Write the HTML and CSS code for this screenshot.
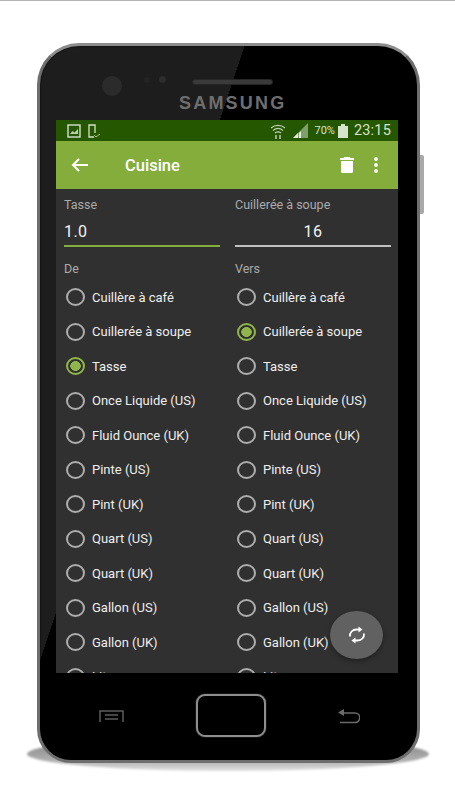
FILE: index.html

```html
<!DOCTYPE html>
<html lang="fr">
<head>
  <meta charset="UTF-8">
  <title>Cuisine</title>
  <meta name="viewport" content="width=device-width, initial-scale=1.0"/>
  <link rel="stylesheet" href="styles.css">
</head>
<body>
  <div class="phone-wrap">
    <div class="phone-shadow"></div>
    <div class="side-key"></div>
    <div class="phone">
      <div class="top-bezel">
        <div class="camera"></div>
        <div class="sensor sensor-a"></div>
        <div class="sensor sensor-b"></div>
        <div class="speaker"></div>
        <div class="brand">SAMSUNG</div>
      </div>

      <div class="screen">
        <div class="status-bar">
          <svg class="st-icon" width="14" height="14" viewBox="0 0 14 14"><rect x="1" y="1" width="12" height="12" fill="none" stroke="#d5e2cc" stroke-width="1.4"/><path d="M3 10l2.5-3 2 1.5L11 5v5z" fill="#b9cdae"/></svg>
          <svg class="st-icon" width="16" height="14" viewBox="0 0 16 14"><path d="M8 13H3V1h6v8" fill="none" stroke="#d5e2cc" stroke-width="1.3"/><path d="M8 11l2 2 4-3" fill="none" stroke="#a9c09b" stroke-width="1"/></svg>
          <span class="st-space"></span>
          <svg class="st-wifi" width="16" height="16" viewBox="0 0 16 16" fill="none" stroke="#b9cdae" stroke-width="1.2"><path d="M1 5c4-3.500 10-3.500 14 0M3 7.500c3-2.500 7-2.500 10 0M5 10c2-1.500 4-1.500 6 0"/><path d="M6 12v4M10 12v4" stroke-width="1.500"/></svg>
          <svg class="st-signal" width="16" height="15" viewBox="0 0 16 15"><path d="M16 0v15H1z" fill="#7fa06a"/><path d="M6 10v5H1zM9 8v7H7v-5z" fill="#e3ebdc"/></svg>
          <span class="st-pct">70%</span>
          <svg class="st-batt" width="10" height="14" viewBox="0 0 10 14"><path d="M3 0h4v2h3v12H0V2h3z" fill="#d5e2cc"/></svg>
          <span class="st-time">23:15</span>
        </div>

        <div class="toolbar">
          <svg class="tb-back" width="18" height="14" viewBox="0 0 18 14" fill="none" stroke="#fff" stroke-width="2"><path d="M17 7H2M8 1L2 7l6 6"/></svg>
          <span class="tb-title">Cuisine</span>
          <svg class="tb-trash" width="14" height="16" viewBox="0 0 14 16" fill="#fff"><path d="M4.500 0h5l1 1H14v2H0V1h3.500zM1 4h12v10.500a1.500 1.500 0 0 1-1.500 1.500h-9A1.500 1.500 0 0 1 1 14.500z"/></svg>
          <svg class="tb-more" width="4" height="16" viewBox="0 0 4 16" fill="#fff"><circle cx="2" cy="2" r="1.900"/><circle cx="2" cy="8" r="1.900"/><circle cx="2" cy="14" r="1.900"/></svg>
        </div>

        <div class="content">
          <div class="columns">
            <div class="column">
              <div class="field-label">Tasse</div>
              <div class="field-value focused">1.0</div>
              <div class="group-label">De</div>
              <div class="radio"><i></i>Cuillère à café</div>
              <div class="radio"><i></i>Cuillerée à soupe</div>
              <div class="radio on"><i></i>Tasse</div>
              <div class="radio"><i></i>Once Liquide (US)</div>
              <div class="radio"><i></i>Fluid Ounce (UK)</div>
              <div class="radio"><i></i>Pinte (US)</div>
              <div class="radio"><i></i>Pint (UK)</div>
              <div class="radio"><i></i>Quart (US)</div>
              <div class="radio"><i></i>Quart (UK)</div>
              <div class="radio"><i></i>Gallon (US)</div>
              <div class="radio"><i></i>Gallon (UK)</div>
              <div class="radio"><i></i>Litre</div>
            </div>
            <div class="column">
              <div class="field-label">Cuillerée à soupe</div>
              <div class="field-value result">16</div>
              <div class="group-label">Vers</div>
              <div class="radio"><i></i>Cuillère à café</div>
              <div class="radio on"><i></i>Cuillerée à soupe</div>
              <div class="radio"><i></i>Tasse</div>
              <div class="radio"><i></i>Once Liquide (US)</div>
              <div class="radio"><i></i>Fluid Ounce (UK)</div>
              <div class="radio"><i></i>Pinte (US)</div>
              <div class="radio"><i></i>Pint (UK)</div>
              <div class="radio"><i></i>Quart (US)</div>
              <div class="radio"><i></i>Quart (UK)</div>
              <div class="radio"><i></i>Gallon (US)</div>
              <div class="radio"><i></i>Gallon (UK)</div>
              <div class="radio"><i></i>Litre</div>
            </div>
          </div>
        </div>

        <div class="fab">
          <svg width="18" height="18" viewBox="0 0 18 18" fill="none" stroke="#fff" stroke-width="1.800"><path d="M2 10.500C1.500 6.500 4.500 3.500 8.500 3.500h3"/><path d="M16 7.500c.5 4-2.500 7-6.500 7h-3"/><path d="M10.500 0.500l4 3-4 3z" fill="#fff" stroke="none"/><path d="M7.500 11.500l-4 3 4 3z" fill="#fff" stroke="none"/></svg>
        </div>
      </div>

      <div class="bottom-bezel">
        <svg width="25" height="13" viewBox="0 0 25 13" fill="none" stroke="#5c5c5c" stroke-width="1.500"><path d="M1 12V1h23v11M6 5h13M6 9h13"/></svg>
        <div class="home-key"></div>
        <svg width="22" height="15" viewBox="0 0 22 15" fill="none" stroke="#6a6a6a" stroke-width="1.500"><path d="M4 4h13a4 4 0 0 1 0 9.500H2"/><path d="M6 0v7L0 3.500z" fill="#6a6a6a" stroke="none"/></svg>
      </div>
    </div>
  </div>
</body>
</html>
```

FILE: styles.css

```css
html, body {
  margin: 0;
  padding: 0;
}
body {
  height: 800px;
  overflow: hidden;
  background-color: #fff;
  border-top: 1px solid #b4b4b4;
  box-sizing: border-box;
  font-family: Roboto, sans-serif;
}
.phone-wrap {
  position: relative;
  width: 383px;
  height: 720px;
  margin: 42px 0 0 37px;
}
.phone-shadow {
  position: absolute;
  left: -10px;
  right: -9px;
  bottom: -8px;
  height: 34px;
  border-radius: 50%;
  background: linear-gradient(#7d7d7d, #b0b0b0 70%, #e2e2e2);
  filter: blur(1px);
}
.side-key {
  position: absolute;
  left: 381px;
  top: 112px;
  width: 6px;
  height: 59px;
  border-radius: 2px;
  background-color: #a9a9a9;
}
.phone {
  position: relative;
  box-sizing: border-box;
  width: 383px;
  height: 720px;
  display: flex;
  flex-direction: column;
  padding: 0 19px;
  border: 3px solid #6e6e6e;
  border-top-color: #8d8d8d;
  border-radius: 42px 42px 34px 34px;
  background: linear-gradient(108.400deg, #1d1d1d 194px, #000 194px);
  box-shadow: inset 0 0 2px #000;
}

/* top of the phone */
.top-bezel {
  position: relative;
  height: 74px;
  margin: 0 -16px;
  flex: none;
}
.camera {
  position: absolute;
  left: 59px;
  top: 30px;
  width: 20px;
  height: 20px;
  border-radius: 50%;
  background-color: #2b2b2b;
}
.sensor {
  position: absolute;
  border-radius: 50%;
  background-color: #232323;
}
.sensor-a {
  left: 101px;
  top: 31px;
  width: 6px;
  height: 6px;
}
.sensor-b {
  left: 116px;
  top: 30px;
  width: 7px;
  height: 7px;
  background-color: #2c2c2c;
}
.speaker {
  position: absolute;
  left: 149px;
  top: 33px;
  width: 81px;
  height: 6px;
  border-radius: 3px;
  background-color: #3a3a3a;
  border: 1px solid #262626;
  box-sizing: border-box;
}
.brand {
  position: absolute;
  left: 136px;
  top: 47px;
  font-family: "Liberation Sans", sans-serif;
  font-size: 18px;
  font-weight: bold;
  letter-spacing: 2.200px;
  color: #6e6e6e;
}

/* screen */
.screen {
  position: relative;
  width: 342px;
  height: 553px;
  margin-left: -3px;
  flex: none;
  display: flex;
  flex-direction: column;
  overflow: hidden;
  background-color: #303030;
}
.status-bar {
  height: 21px;
  flex: none;
  display: flex;
  align-items: center;
  padding: 0 7px 0 11px;
  background-color: #255600;
  color: #d5e2cc;
}
.st-icon {
  margin-right: 5px;
}
.st-space {
  flex: 1;
}
.st-wifi {
  margin-right: 6px;
}
.st-signal {
  margin-right: 6px;
}
.st-pct {
  font-size: 11px;
  margin-right: 3px;
}
.st-batt {
  margin-right: 6px;
}
.st-time {
  font-size: 14.500px;
  letter-spacing: .2px;
}
.toolbar {
  height: 48px;
  flex: none;
  display: flex;
  align-items: center;
  padding: 0 20px 0 15px;
  background-color: #84ad3b;
  color: #fff;
}
.tb-title {
  flex: 1;
  margin-left: 36px;
  font-size: 16.500px;
  font-weight: 500;
}
.tb-trash {
  margin-right: 20px;
}
.content {
  flex: 1;
  padding: 0 7px 0 8px;
  overflow: hidden;
}
.columns {
  display: grid;
  grid-template-columns: 156px 156px;
  column-gap: 15px;
}
.field-label {
  margin-top: 8px;
  font-size: 12.500px;
  line-height: 16px;
  color: #ababab;
}
.field-value {
  margin-top: 9px;
  height: 23px;
  line-height: 20px;
  font-size: 16px;
  color: #f2f2f2;
  letter-spacing: .4px;
}
.focused {
  border-bottom: 2px solid #84ad3b;
}
.result {
  text-align: center;
  border-bottom: 2px solid #c0c0c0;
}
.group-label {
  margin-top: 14px;
  margin-bottom: 3px;
  font-size: 12.500px;
  line-height: 16px;
  color: #ababab;
}
.radio {
  height: 34.500px;
  display: flex;
  align-items: center;
  font-size: 13px;
  color: #eee;
  white-space: nowrap;
}
.radio i {
  box-sizing: border-box;
  width: 19px;
  height: 18px;
  margin: 0 7px 0 2px;
  border: 2px solid #adadad;
  border-radius: 50%;
  flex: none;
}
.radio.on i {
  border-color: #90b54a;
  background: radial-gradient(ellipse at center, #90b54a 5px, transparent 5.500px);
}
.fab {
  position: absolute;
  left: 274px;
  top: 491px;
  width: 53px;
  height: 48px;
  border-radius: 50%;
  display: flex;
  align-items: center;
  justify-content: center;
  background-color: #616161;
  box-shadow: 0 2px 5px rgba(0,0,0,.35);
}

/* bottom keys */
.bottom-bezel {
  flex: 1;
  display: flex;
  align-items: center;
  justify-content: space-between;
  margin-left: -3px;
  padding: 0 38px 0 43px;
  width: 342px;
  box-sizing: border-box;
}
.home-key {
  box-sizing: border-box;
  width: 70px;
  height: 43px;
  margin-top: -3px;
  border: 2px solid #8e8e8e;
  border-radius: 9px;
  box-shadow: 0 0 1px #ccc;
}
```
